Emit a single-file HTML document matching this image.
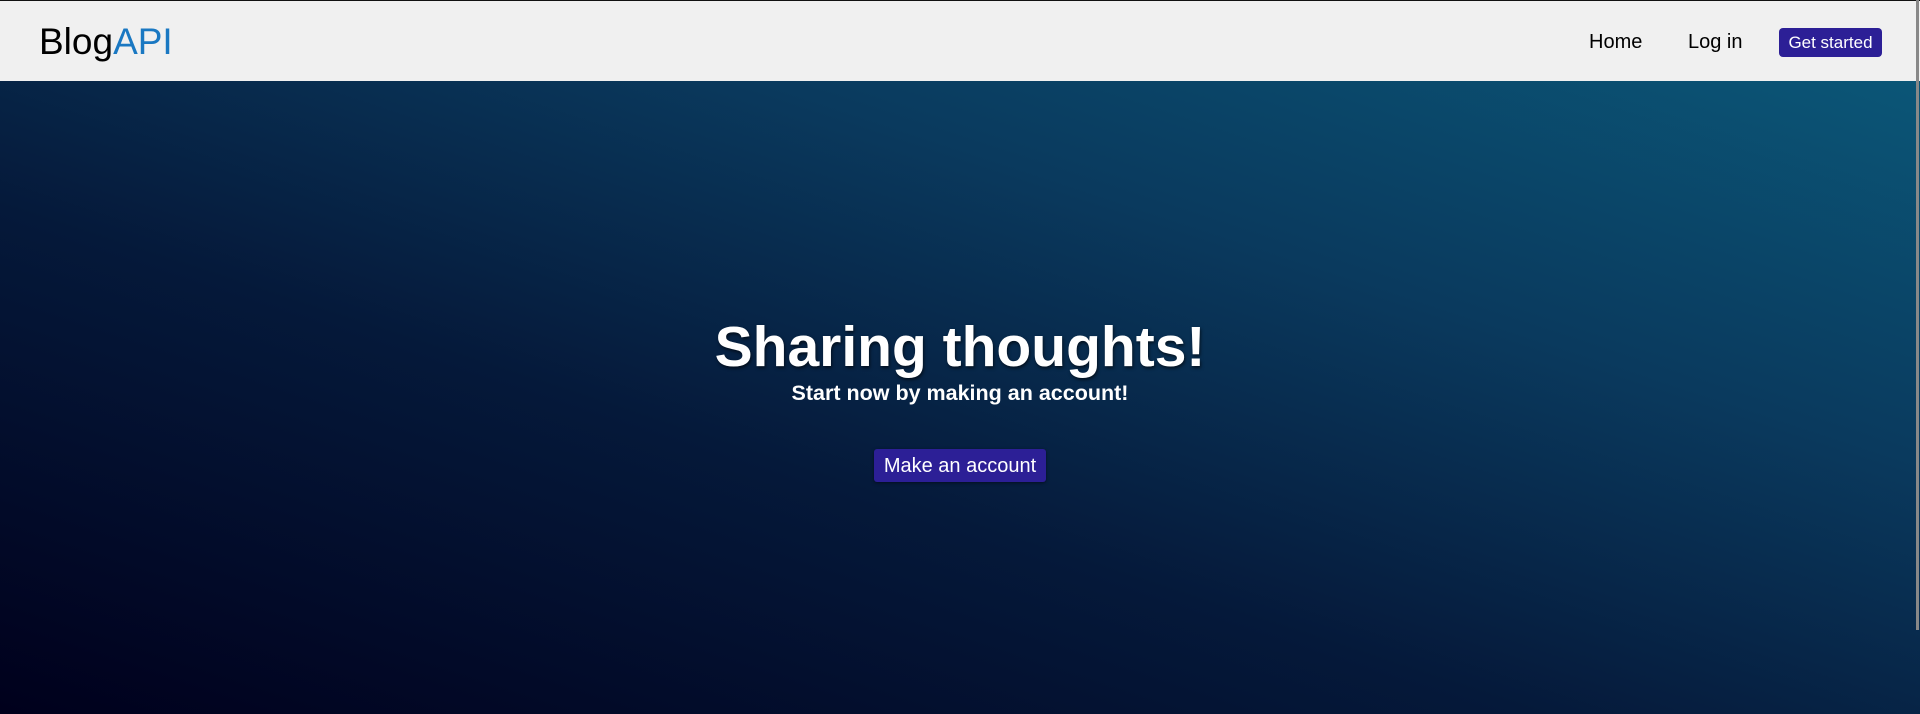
<!DOCTYPE html>
<html><head><style>
html,body{margin:0;padding:0;width:1920px;height:714px;overflow:hidden;font-family:"Liberation Sans",sans-serif}
.top{position:absolute;left:0;top:0;width:1920px;height:1px;background:#111}
nav{position:absolute;left:0;top:1px;width:1920px;height:80px;background:#f0f0f0}
.logo{position:absolute;left:39px;top:20px;font-size:37px;color:#000}
.logo span{color:#1a78c2}
.home{position:absolute;left:1589px;top:30px;font-size:20px;color:#000}
.login{position:absolute;left:1688px;top:30px;font-size:20px;color:#000}
.gs{position:absolute;left:1779px;top:27px;width:103px;height:29px;background:#2c1f96;border-radius:4px;color:#fff;font-size:17px;line-height:30px;text-align:center}
.hero{position:absolute;left:0;top:81px;width:1920px;height:633px;background:linear-gradient(to top right,#00001c 0%,#05193a 40%,#0a3a5e 70%,#0b5677 100%)}
h1{position:absolute;left:0;width:1920px;top:314px;margin:0;text-align:center;font-size:57px;font-weight:bold;color:#fff;text-shadow:1px 2px 3px rgba(0,0,0,.6)}
.sub{position:absolute;left:0;width:1920px;top:381px;text-align:center;font-size:21.5px;font-weight:bold;color:#fff}
.btn{position:absolute;left:874px;top:449px;width:172px;height:33px;background:#2c1f96;border-radius:3px;color:#fff;font-size:20px;line-height:35px;text-align:center;box-shadow:0 1px 3px rgba(0,0,0,.5)}
.sb{position:absolute;left:1916px;top:0;width:3px;height:630px;background:#888}
</style></head><body>
<div class="hero"></div>
<div class="top"></div>
<nav>
<div class="logo">Blog<span>API</span></div>
<div class="home">Home</div>
<div class="login">Log in</div>
<div class="gs">Get started</div>
</nav>
<h1>Sharing thoughts!</h1>
<div class="sub">Start now by making an account!</div>
<div class="btn">Make an account</div>
<div class="sb"></div>
</body></html>
